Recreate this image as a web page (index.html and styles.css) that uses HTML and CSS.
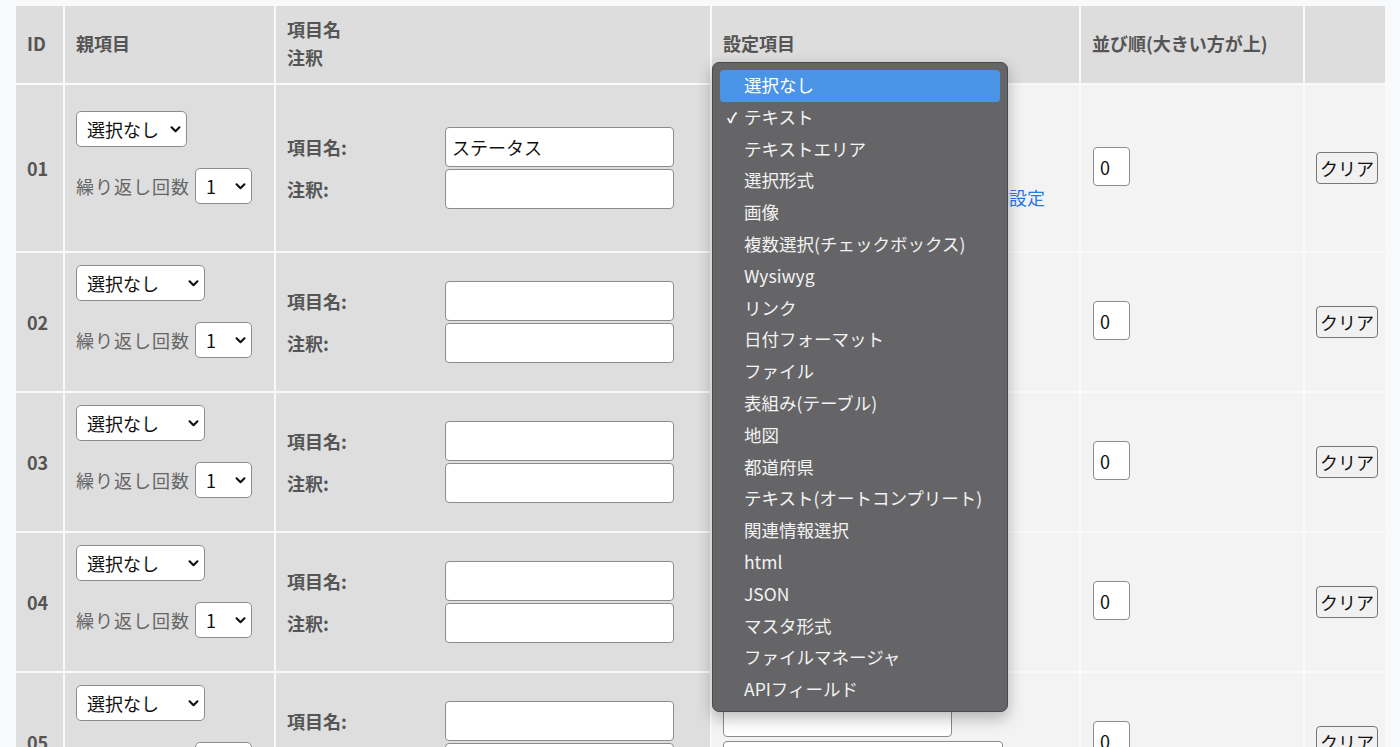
FILE: index.html
```html
<!DOCTYPE html>
<html lang="ja">
<head>
<meta charset="utf-8">
<title>項目設定</title>
<link rel="stylesheet" href="styles.css">
</head>
<body>
<table class="fields">
  <colgroup>
    <col class="c-id"><col class="c-parent"><col class="c-name"><col class="c-type"><col class="c-order"><col class="c-act">
  </colgroup>
  <thead>
    <tr>
      <th>ID</th>
      <th>親項目</th>
      <th>項目名<br>注釈</th>
      <th>設定項目</th>
      <th>並び順(大きい方が上)</th>
      <th></th>
    </tr>
  </thead>
  <tbody>
    <tr>
      <td class="id">01</td>
      <td class="parent">
        <div class="p-sel"><span class="sw"><select class="sel sel-narrow"><option>選択なし</option></select><svg class="chev" viewBox="0 0 12 8"><path d="M1.5 1.5 6 6l4.5-4.5"/></svg></span></div>
        <div class="repeat"><span class="rl">繰り返し回数</span><span class="sw"><select class="sel sel-num"><option>1</option></select><svg class="chev" viewBox="0 0 12 8"><path d="M1.5 1.5 6 6l4.5-4.5"/></svg></span></div>
      </td>
      <td class="names">
        <div class="ngrid">
          <label class="lbl">項目名:</label><input class="txt" type="text" value="ステータス">
          <label class="lbl">注釈:</label><input class="txt" type="text">
        </div>
      </td>
      <td class="type">
        <div class="type-box tall">
          <span class="sw"><select class="sel sel-type"><option>テキスト</option></select><svg class="chev" viewBox="0 0 12 8"><path d="M1.5 1.5 6 6l4.5-4.5"/></svg></span>
          <a class="cfg-link" href="#">詳細設定</a>
        </div>
      </td>
      <td class="order"><input class="num" type="text" value="0"></td>
      <td class="act"><button class="clear" type="button">クリア</button></td>
    </tr>
    <tr>
      <td class="id">02</td>
      <td class="parent">
        <div class="p-sel"><span class="sw"><select class="sel sel-wide"><option>選択なし</option></select><svg class="chev" viewBox="0 0 12 8"><path d="M1.5 1.5 6 6l4.5-4.5"/></svg></span></div>
        <div class="repeat"><span class="rl">繰り返し回数</span><span class="sw"><select class="sel sel-num"><option>1</option></select><svg class="chev" viewBox="0 0 12 8"><path d="M1.5 1.5 6 6l4.5-4.5"/></svg></span></div>
      </td>
      <td class="names">
        <div class="ngrid">
          <label class="lbl">項目名:</label><input class="txt" type="text">
          <label class="lbl">注釈:</label><input class="txt" type="text">
        </div>
      </td>
      <td class="type"><div class="type-box"><span class="sw"><select class="sel sel-type"><option>選択なし</option></select><svg class="chev" viewBox="0 0 12 8"><path d="M1.5 1.5 6 6l4.5-4.5"/></svg></span></div></td>
      <td class="order"><input class="num" type="text" value="0"></td>
      <td class="act"><button class="clear" type="button">クリア</button></td>
    </tr>
    <tr>
      <td class="id">03</td>
      <td class="parent">
        <div class="p-sel"><span class="sw"><select class="sel sel-wide"><option>選択なし</option></select><svg class="chev" viewBox="0 0 12 8"><path d="M1.5 1.5 6 6l4.5-4.5"/></svg></span></div>
        <div class="repeat"><span class="rl">繰り返し回数</span><span class="sw"><select class="sel sel-num"><option>1</option></select><svg class="chev" viewBox="0 0 12 8"><path d="M1.5 1.5 6 6l4.5-4.5"/></svg></span></div>
      </td>
      <td class="names">
        <div class="ngrid">
          <label class="lbl">項目名:</label><input class="txt" type="text">
          <label class="lbl">注釈:</label><input class="txt" type="text">
        </div>
      </td>
      <td class="type"><div class="type-box"><span class="sw"><select class="sel sel-type"><option>選択なし</option></select><svg class="chev" viewBox="0 0 12 8"><path d="M1.5 1.5 6 6l4.5-4.5"/></svg></span></div></td>
      <td class="order"><input class="num" type="text" value="0"></td>
      <td class="act"><button class="clear" type="button">クリア</button></td>
    </tr>
    <tr>
      <td class="id">04</td>
      <td class="parent">
        <div class="p-sel"><span class="sw"><select class="sel sel-wide"><option>選択なし</option></select><svg class="chev" viewBox="0 0 12 8"><path d="M1.5 1.5 6 6l4.5-4.5"/></svg></span></div>
        <div class="repeat"><span class="rl">繰り返し回数</span><span class="sw"><select class="sel sel-num"><option>1</option></select><svg class="chev" viewBox="0 0 12 8"><path d="M1.5 1.5 6 6l4.5-4.5"/></svg></span></div>
      </td>
      <td class="names">
        <div class="ngrid">
          <label class="lbl">項目名:</label><input class="txt" type="text">
          <label class="lbl">注釈:</label><input class="txt" type="text">
        </div>
      </td>
      <td class="type"><div class="type-box"><span class="sw"><select class="sel sel-type"><option>選択なし</option></select><svg class="chev" viewBox="0 0 12 8"><path d="M1.5 1.5 6 6l4.5-4.5"/></svg></span></div></td>
      <td class="order"><input class="num" type="text" value="0"></td>
      <td class="act"><button class="clear" type="button">クリア</button></td>
    </tr>
    <tr>
      <td class="id">05</td>
      <td class="parent">
        <div class="p-sel"><span class="sw"><select class="sel sel-wide"><option>選択なし</option></select><svg class="chev" viewBox="0 0 12 8"><path d="M1.5 1.5 6 6l4.5-4.5"/></svg></span></div>
        <div class="repeat"><span class="rl">繰り返し回数</span><span class="sw"><select class="sel sel-num"><option>1</option></select><svg class="chev" viewBox="0 0 12 8"><path d="M1.5 1.5 6 6l4.5-4.5"/></svg></span></div>
      </td>
      <td class="names">
        <div class="ngrid">
          <label class="lbl">項目名:</label><input class="txt" type="text">
          <label class="lbl">注釈:</label><input class="txt" type="text">
        </div>
      </td>
      <td class="type">
        <div class="type-box">
          <input class="txt t-a" type="text">
          <input class="txt t-b" type="text">
        </div>
      </td>
      <td class="order"><input class="num" type="text" value="0"></td>
      <td class="act"><button class="clear" type="button">クリア</button></td>
    </tr>
  </tbody>
</table>

<ul class="popup" role="listbox">
  <li class="opt hl">選択なし</li>
  <li class="opt checked"><span class="ck">✓</span>テキスト</li>
  <li class="opt">テキストエリア</li>
  <li class="opt">選択形式</li>
  <li class="opt">画像</li>
  <li class="opt">複数選択(チェックボックス)</li>
  <li class="opt">Wysiwyg</li>
  <li class="opt">リンク</li>
  <li class="opt">日付フォーマット</li>
  <li class="opt">ファイル</li>
  <li class="opt">表組み(テーブル)</li>
  <li class="opt">地図</li>
  <li class="opt">都道府県</li>
  <li class="opt">テキスト(オートコンプリート)</li>
  <li class="opt">関連情報選択</li>
  <li class="opt">html</li>
  <li class="opt">JSON</li>
  <li class="opt">マスタ形式</li>
  <li class="opt">ファイルマネージャ</li>
  <li class="opt">APIフィールド</li>
</ul>
</body>
</html>
```

FILE: styles.css
```css
* { box-sizing: border-box; }

html, body {
  margin: 0;
  padding: 0;
  background: #f8f9fb;
  font-family: "Noto Sans CJK JP", "Noto Sans", sans-serif;
  font-size: 18px;
  color: #222;
}

body {
  position: relative;
  padding: 4px 0 0 14px;
}

.fields {
  border-collapse: separate;
  border-spacing: 2px;
  table-layout: fixed;
  width: 1373px;
}

.c-id { width: 47px; }
.c-parent { width: 209px; }
.c-name { width: 434px; }
.c-type { width: 367px; }
.c-order { width: 222px; }
.c-act { width: 80px; }

.fields th {
  background: #dddddd;
  color: #555;
  font-weight: bold;
  text-align: left;
  line-height: 28px;
  padding: 9px 11px 12px;
  vertical-align: middle;
}

.fields td {
  padding: 12px 11px;
  vertical-align: middle;
  background: #dedede;
}

.fields td.type,
.fields td.order,
.fields td.act {
  background: #f3f3f3;
}

.id {
  font-weight: bold;
  color: #555;
}

/* select look */
.sw {
  position: relative;
  display: inline-block;
  vertical-align: middle;
}

.sel {
  appearance: none;
  -webkit-appearance: none;
  display: block;
  height: 36px;
  background: #fff;
  border: 1px solid #8c8c8c;
  border-radius: 5px;
  font-family: inherit;
  font-size: 18px;
  color: #111;
  padding: 0 28px 0 10px;
  line-height: 34px;
}

.sel-narrow { width: 111px; }
.sel-wide { width: 129px; }
.sel-num { width: 57px; padding-left: 10px; }
.sel-type { width: 229px; }

.chev {
  position: absolute;
  right: 6px;
  top: 15px;
  width: 11px;
  height: 7px;
  fill: none;
  stroke: #111;
  stroke-width: 2.4;
  stroke-linecap: round;
  stroke-linejoin: round;
  pointer-events: none;
}

.p-sel { margin-bottom: 21px; }

.repeat {
  display: flex;
  align-items: center;
  gap: 5px;
  margin-bottom: 21px;
}

.rl {
  color: #666;
  white-space: nowrap;
  letter-spacing: 1px;
}

/* names grid */
.ngrid {
  display: grid;
  grid-template-columns: 158px 229px;
  row-gap: 2px;
  align-items: center;
}

.lbl {
  font-weight: bold;
  color: #555;
}

.txt {
  width: 229px;
  height: 40px;
  background: #fff;
  border: 1px solid #8c8c8c;
  border-radius: 4px;
  font-family: inherit;
  font-size: 18px;
  color: #111;
  padding: 0 6px;
}

/* type column */
.type-box {
  display: flex;
  flex-direction: column;
  align-items: flex-start;
  gap: 4px;
}

.type-box.tall {
  height: 142px;
  gap: 0;
}

.cfg-link {
  display: block;
  margin-top: 51px;
  color: #2b7ae0;
  text-decoration: none;
  padding-left: 250px;
  white-space: nowrap;
}

.t-a { height: 34px; }
.t-b { width: 280px; }

.num {
  width: 37px;
  height: 39px;
  background: #fff;
  border: 1px solid #8c8c8c;
  border-radius: 4px;
  font-family: inherit;
  font-size: 18px;
  color: #111;
  padding: 0 6px;
  margin-top: -3px;
  margin-left: 1px;
}

.clear {
  width: 62px;
  height: 32px;
  padding: 0;
  background: #f1f1f1;
  border: 1px solid #777;
  border-radius: 4px;
  font-family: inherit;
  font-size: 18px;
  color: #111;
  line-height: 30px;
}

/* open native popup */
.popup {
  position: absolute;
  left: 712px;
  top: 62px;
  width: 296px;
  height: 650px;
  margin: 0;
  padding: 7px 7px;
  list-style: none;
  background: #656567;
  border: 1px solid #4a4a4c;
  border-radius: 7px;
  box-shadow: 0 6px 16px rgba(0, 0, 0, 0.28);
}

.opt {
  position: relative;
  height: 31.8px;
  line-height: 30.8px;
  padding-left: 24px;
  color: #f2f2f2;
  font-size: 17.5px;
  white-space: nowrap;
}

.opt.hl {
  background: #4a94e6;
  border-radius: 4px;
  color: #fff;
}

.ck {
  position: absolute;
  left: 7px;
  top: 0;
  font-size: 14px;
  font-weight: bold;
  color: #fff;
}
```
